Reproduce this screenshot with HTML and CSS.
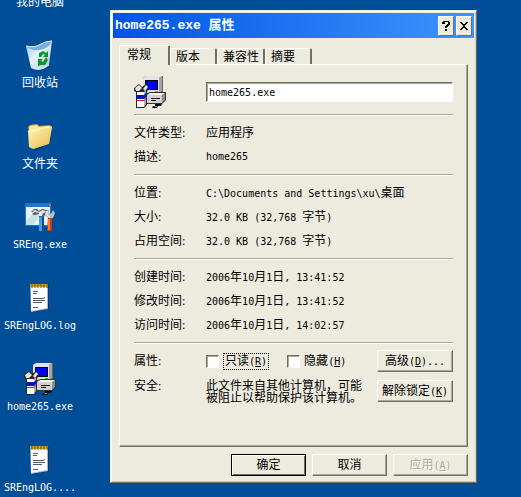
FILE: index.html
```html
<!DOCTYPE html>
<html lang="zh-CN">
<head>
    <meta charset="UTF-8">
    <meta name="viewport" content="width=device-width, initial-scale=1.0">
    <title>home265.exe 属性</title>
    <link rel="stylesheet" href="styles.css">
</head>
<body>
    <!-- 公用图标 -->
    <svg class="defs" aria-hidden="true">
        <defs>
            <linearGradient id="binFill" x1="0" y1="0" x2="1" y2="1">
                <stop offset="0" stop-color="#8fc0f2"/>
                <stop offset=".45" stop-color="#e8f4ff"/>
                <stop offset="1" stop-color="#9fbfe4"/>
            </linearGradient>
            <linearGradient id="folderFill" x1="0" y1="0" x2="1" y2="1">
                <stop offset="0" stop-color="#fff6b4"/>
                <stop offset="1" stop-color="#e9bb4c"/>
            </linearGradient>
            <symbol id="setup" viewBox="0 0 32 32">
                <path d="M9 2l3-2h17v16l-3 2H9z" fill="#666"/>
                <path d="M9 2l3-2h16l-3 2v15H9z" fill="#e4e4e4"/>
                <path d="M25 2l3-2v15l-3 2z" fill="#a4a4a4"/>
                <path d="M11 4h13v10H11z" fill="#000"/>
                <path d="M12 5h11v8H12z" fill="#0000f0"/>
                <path d="M21 15h3v1h-3z" fill="#00e000"/>
                <path d="M12 18l4-2h16v8l-4 4H12z" fill="#333"/>
                <path d="M13 19h15v8H13z" fill="#d2d2d2"/>
                <path d="M28 19l3-2v7l-3 3z" fill="#8b8b8b"/>
                <path d="M13 19l3-2h15l-3 2z" fill="#f4f4f4"/>
                <path d="M17 22h9v1h-9zM17 24h5v1h-5z" fill="#111"/>
                <path d="M0 12l5-4 3 3 4-3 3 3-2 5v13l-3 3H2V16l-2-1z" fill="#252525"/>
                <path d="M1 12l4-3 3 3-3 3H2zM9 13l3-4 2 2-3 4z" fill="#e4e4e4"/>
                <path d="M3 16h7v15H3z" fill="#fff"/>
                <path d="M10 16l2-2v14l-2 3z" fill="#b4b4b4"/>
                <path d="M3 19h7l2-2v4l-2 2H3z" fill="#0018c0"/>
                <path d="M3 24h7l2-2v1l-2 2H3z" fill="#d01828"/>
                <path d="M21 28h7l-1 2h-3l-1 2h-5l1-2h2z" fill="#080808"/>
                <path d="M21 30h2v1h-3z" fill="#999"/>
            </symbol>
            <symbol id="notepad" viewBox="0 0 32 32">
                <path d="M7 4l18-1v24L8 31z" fill="#0b2a55" opacity=".6"/>
                <path d="M6 3h18v24L7 30z" fill="#a8b5d8"/>
                <path d="M7 4h16v22L7 29z" fill="#fff"/>
                <path d="M6 2h18v3H6z" fill="#c9a52d"/>
                <path d="M8 1v5M11 1v5M14 1v5M17 1v5M20 1v5M23 1v5" stroke="#675311" fill="none"/>
                <path d="M9 9.500h5M9 11.500h4M9 16.500h10l2-1M9 18.500h12M9 20.500h9M9 25.500h5" stroke="#555b68" fill="none"/>
            </symbol>
        </defs>
    </svg>

    <main class="desktop">
        <!-- 桌面图标 -->
        <ul class="icons">
            <li class="icon-item">
                <svg class="icon" viewBox="0 0 32 32" aria-hidden="true"><path d="M4 3h24v20H4z" fill="#ddd"/></svg>
                <span>我的电脑</span>
            </li>
            <li class="icon-item">
                <svg class="icon" viewBox="0 0 32 32" aria-hidden="true">
                    <path d="M3 7l25-3-3 25-10 3-8-3z" fill="#062d60" opacity=".55"/>
                    <path d="M2 7Q11 9 17 5q5-3 11-3l-3 24q-8 8-18 3z" fill="url(#binFill)"/>
                    <path d="M2 7Q11 9 17 5q5-3 11-3-3 8-13 9Q7 12 2 7z" fill="#7badde"/>
                    <path d="M2 7Q11 9 17 5q5-3 11-3" stroke="#e9f6ff" fill="none"/>
                    <path d="M7 28q8 5 18-2" stroke="#d7eafa" fill="none"/>
                    <path d="M15 18v-4l4-2 3 2 2-2v6h-5l2-2-2-1-2 3z" fill="#119522"/>
                    <path d="M14 20h5l-2 2 2 1 3-5 2 3-3 5h-4l-3 1z" fill="#119522"/>
                </svg>
                <span>回收站</span>
            </li>
            <li class="icon-item">
                <svg class="icon" viewBox="0 0 32 32" aria-hidden="true">
                    <path d="M6 9l22-5-3 21-15 6z" fill="#062d60" opacity=".5"/>
                    <path d="M4 7l2-2 7-1 2 2 11-1 2 2-3 16-16 6z" fill="#dba63a"/>
                    <path d="M5 7l2-1 6-1 2 2 10-1 1 2-2 14-16 4z" fill="#ffe99a"/>
                    <path d="M4 11l11-1 3-2 10-1-3 17-16 5-4-2z" fill="url(#folderFill)"/>
                    <path d="M4 11l11-1 3-2 10-1" stroke="#fffbd7" fill="none"/>
                </svg>
                <span>文件夹</span>
            </li>
            <li class="icon-item">
                <svg class="icon" viewBox="0 0 32 32" aria-hidden="true">
                    <path d="M1 2h26v23H1z" fill="#2370ce"/>
                    <path d="M2 6h24v18H2z" fill="#e6f3f8"/>
                    <path d="M2 20L12 10l5 3-8 11H2z" fill="#c5e2e9"/>
                    <path d="M25 3h2v2h-2z" fill="#ef5b36"/>
                    <path d="M16 15h4v16h-4z" fill="#124987"/>
                    <path d="M15 15h3v15h-3z" fill="#3f9bed"/>
                    <path d="M24 17h4v13h-5z" fill="#cb3a0b"/>
                    <path d="M24 18h2v11h-2z" fill="#ff7a2d"/>
                    <path d="M7 11l3-3h3l2 2 3-2 5 1 2 3-3-1-2 5h-5v-3l-5 1-2-1 3-2z" fill="#555d64"/>
                    <path d="M8 10l3-1 4 2 4-2 4 2-4 1-1 3h-3v-3l-4-1z" fill="#e7e7e7"/>
                    <path d="M22 10l3-2v4l2 1 2-4 2 3-2 5h-5l-3-3z" fill="#b8c0c5"/>
                    <path d="M23 10v4l3 2" stroke="#fff" fill="none"/>
                </svg>
                <span class="en">SREng.exe</span>
            </li>
            <li class="icon-item">
                <svg class="icon" aria-hidden="true"><use href="#notepad"/></svg>
                <span class="en">SREngLOG.log</span>
            </li>
            <li class="icon-item">
                <svg class="icon" aria-hidden="true"><use href="#setup"/></svg>
                <span class="en">home265.exe</span>
            </li>
            <li class="icon-item">
                <svg class="icon" aria-hidden="true"><use href="#notepad"/></svg>
                <span class="en">SREngLOG....</span>
            </li>
        </ul>

        <!-- 属性窗口 -->
        <section class="dialog" role="dialog" aria-labelledby="dialogTitle">
            <header class="title-bar">
                <h1 id="dialogTitle">home265.exe 属性</h1>
                <button class="title-btn" type="button" aria-label="帮助">
                    <svg viewBox="0 0 10 12" aria-hidden="true"><path d="M2 1h6v1h1v3H8v1H7v1H6v1H4V6h1V5h1V4h1V2H4v2H1V2h1zM4 9h2v2H4z"/></svg>
                </button>
                <button class="title-btn" type="button" aria-label="关闭">
                    <svg viewBox="0 0 10 12" aria-hidden="true"><path d="M1 2h2v1h1v1h2V3h1V2h2v1H8v1H7v1H6v2h1v1h1v1h1v1H7V9H6V8H4v1H3v1H1V9h1V8h1V7h1V5H3V4H2V3H1z"/></svg>
                </button>
            </header>

            <div class="dialog-body">
                <div class="tabs" role="tablist">
                    <button class="tab active" type="button" role="tab" aria-selected="true">常规</button>
                    <button class="tab" type="button" role="tab">版本</button>
                    <button class="tab" type="button" role="tab">兼容性</button>
                    <button class="tab" type="button" role="tab">摘要</button>
                </div>

                <div class="panel" role="tabpanel">
                    <div class="row">
                        <svg class="icon" aria-hidden="true"><use href="#setup"/></svg>
                        <input class="file-name en" type="text" value="home265.exe" aria-label="文件名">
                    </div>
                    <hr>
                    <div class="row"><span>文件类型:</span><span>应用程序</span></div>
                    <div class="row"><span>描述:</span><span class="en">home265</span></div>
                    <hr>
                    <div class="row"><span>位置:</span><span><span class="en">C:\Documents and Settings\xu\</span>桌面</span></div>
                    <div class="row"><span>大小:</span><span><span class="en">32.0 KB (32,768 </span>字节<span class="en">)</span></span></div>
                    <div class="row"><span>占用空间:</span><span><span class="en">32.0 KB (32,768 </span>字节<span class="en">)</span></span></div>
                    <hr>
                    <div class="row"><span>创建时间:</span><span><span class="en">2006</span>年<span class="en">10</span>月<span class="en">1</span>日<span class="en">, 13:41:52</span></span></div>
                    <div class="row"><span>修改时间:</span><span><span class="en">2006</span>年<span class="en">10</span>月<span class="en">1</span>日<span class="en">, 13:41:52</span></span></div>
                    <div class="row"><span>访问时间:</span><span><span class="en">2006</span>年<span class="en">10</span>月<span class="en">1</span>日<span class="en">, 14:02:57</span></span></div>
                    <hr>
                    <div class="row attr-row">
                        <span>属性:</span>
                        <div class="checks">
                            <input type="checkbox" id="readOnly">
                            <label class="focused" for="readOnly">只读<span class="en">(<u>R</u>)</span></label>
                            <input type="checkbox" id="hiddenFile">
                            <label for="hiddenFile">隐藏<span class="en">(<u>H</u>)</span></label>
                        </div>
                        <button class="btn" type="button">高级<span class="en">(<u>D</u>)...</span></button>
                    </div>
                    <div class="row attr-row safe-row">
                        <span>安全:</span>
                        <p>此文件来自其他计算机，可能被阻止以帮助保护该计算机。</p>
                        <button class="btn" type="button">解除锁定<span class="en">(<u>K</u>)</span></button>
                    </div>
                </div>

                <footer class="actions">
                    <button class="btn default" type="button">确定</button>
                    <button class="btn" type="button">取消</button>
                    <button class="btn" type="button" disabled>应用<span class="en">(<u>A</u>)</span></button>
                </footer>
            </div>
        </section>
    </main>
</body>
</html>
```

FILE: styles.css
```css
* { box-sizing: border-box; }
body { margin: 0; overflow: hidden; background: #004e98; color: #000; font: 12px/16px "Liberation Serif", "Noto Sans CJK SC", sans-serif; }
button, input { margin: 0; font: inherit; color: inherit; }
.en { font-family: "DejaVu Sans Mono", monospace; font-size: 10px; white-space: pre; }
.defs { position: absolute; width: 0; height: 0; }
.icon { display: block; width: 32px; height: 32px; flex: none; }

/* 桌面 */
.desktop { display: flex; align-items: flex-start; min-height: 100vh; }
.icons { width: 80px; flex: none; margin: -42px 0 0; padding: 0; list-style: none; color: #fff; }
.icon-item { display: flex; flex-direction: column; align-items: center; gap: 4px; height: 81px; }
.icon-item:last-child { height: auto; }

/* 窗口 */
.dialog { flex: 1; min-width: 0; margin: 10px 44px 15px 30px; padding: 2px; background: #edeade; border: 1px solid; border-color: #edeade #716f64 #716f64 #edeade; box-shadow: inset 1px 1px #fff, inset -1px -1px #d0cbbb; }
.title-bar { display: flex; align-items: center; gap: 2px; height: 25px; padding: 0 2px; background: linear-gradient(to right, #0054e3, #3d95ff); color: #fff; }
.title-bar h1 { flex: 1; margin: 0; font: bold 13px/20px "Liberation Mono", "Noto Sans CJK SC", monospace; }
.title-btn { display: flex; align-items: center; justify-content: center; width: 16px; height: 20px; padding: 0; background: #edeade; border: 1px solid; border-color: #fff #716f64 #716f64 #fff; }
.title-btn svg { width: 10px; height: 12px; flex: none; }
.dialog-body { padding: 7px 6px 4px; }

/* 选项卡 */
.tabs { display: flex; align-items: flex-end; height: 19px; }
.tab { height: 16px; padding: 0 15px 0 5px; background: #edeade; border: solid; border-width: 1px 2px 0 1px; border-color: #fff #716f64 #fff #fff; border-radius: 2px 2px 0 0; line-height: 16px; }
.tab:nth-child(3) { padding-right: 4px; }
.tab.active { position: relative; height: 20px; margin-bottom: -1px; padding: 0 17px 2px 7px; }
.panel { padding: 9px 14px 42px; border: 1px solid; border-color: #fff #716f64 #716f64 #fff; box-shadow: inset -1px -1px #aca899; }
.panel hr { height: 2px; margin: 6px 0 4px; border: 0; border-top: 1px solid #aca899; border-bottom: 1px solid #fff; }

/* 内容行 */
.row { display: grid; grid-template-columns: 72px 1fr; align-items: center; min-height: 24px; padding-top: 2px; }
.file-name { width: 100%; height: 20px; padding: 0 2px; background: #fff; border: 1px solid; border-color: #716f64 #fff #fff #716f64; box-shadow: inset 1px 1px #aca899; }
.attr-row { grid-template-columns: 72px 1fr 76px; }
.checks { display: flex; align-items: center; gap: 4px; }
.checks input { appearance: none; width: 13px; height: 13px; background: #fff; border: 1px solid; border-color: #716f64 #fff #fff #716f64; box-shadow: inset 1px 1px #aca899; }
.checks label { line-height: 14px; }
.checks label.focused { margin-right: 14px; padding: 0 1px; border: 1px dotted #000; }
.safe-row { align-items: start; margin-top: 6px; }
.safe-row > span { line-height: 12px; }
.safe-row p { margin: 0; padding-right: 8px; line-height: 12px; }
.btn { height: 22px; padding: 0; background: #edeade; border: 1px solid; border-color: #fff #716f64 #716f64 #fff; box-shadow: inset -1px -1px #aca899; line-height: 18px; white-space: nowrap; }
.btn:disabled { color: #aca899; text-shadow: 1px 1px #fff; }
.btn.default { border-color: #000; box-shadow: inset 1px 1px #fff, inset -1px -1px #716f64; }
.actions { display: flex; justify-content: flex-end; gap: 6px; margin-top: 7px; }
.actions .btn { width: 75px; }
```
